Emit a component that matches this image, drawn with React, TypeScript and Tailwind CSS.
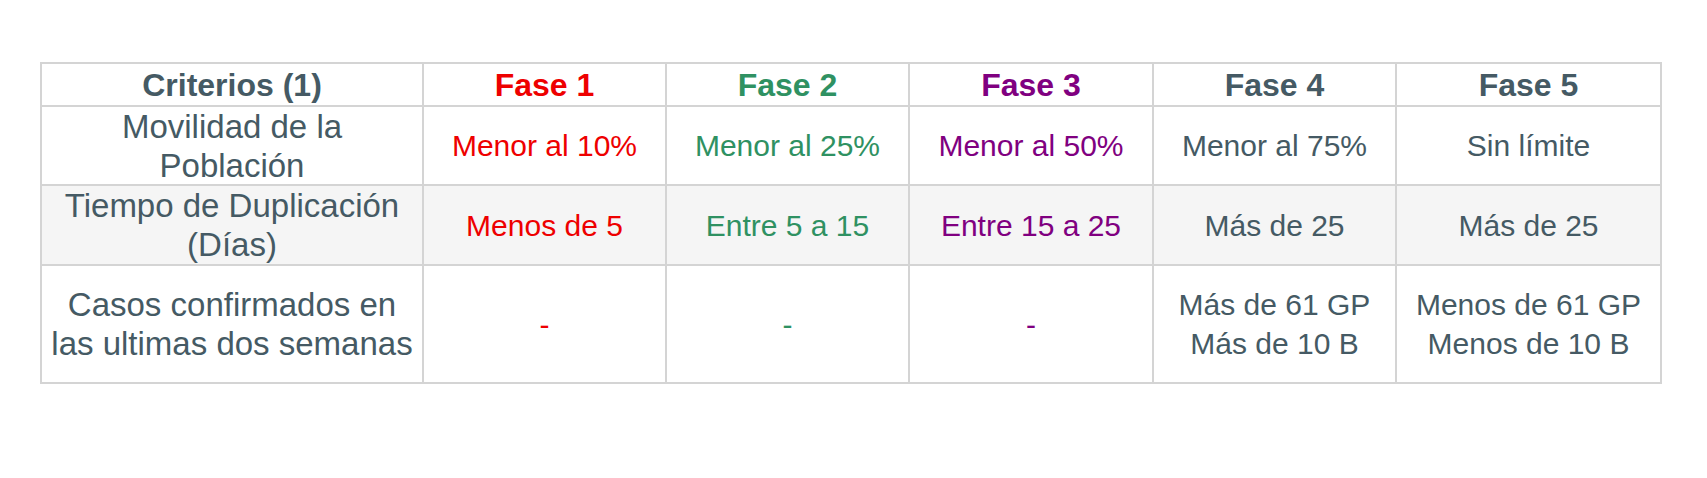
import { Fragment } from "react";

const GRAY = "text-[#455a64]";

const phases = [
  { name: "Fase 1", color: "text-[#ee0000]" },
  { name: "Fase 2", color: "text-[#2f9162]" },
  { name: "Fase 3", color: "text-[#800080]" },
  { name: "Fase 4", color: GRAY },
  { name: "Fase 5", color: GRAY },
];

const rows = [
  {
    label: ["Movilidad de la", "Población"],
    values: [["Menor al 10%"], ["Menor al 25%"], ["Menor al 50%"], ["Menor al 75%"], ["Sin límite"]],
    bg: "bg-white",
    h: "h-[77px]",
  },
  {
    label: ["Tiempo de Duplicación", "(Días)"],
    values: [["Menos de 5"], ["Entre 5 a 15"], ["Entre 15 a 25"], ["Más de 25"], ["Más de 25"]],
    bg: "bg-[#f5f5f5]",
    h: "h-[78px]",
  },
  {
    label: ["Casos confirmados en", "las ultimas dos semanas"],
    values: [["-"], ["-"], ["-"], ["Más de 61 GP", "Más de 10 B"], ["Menos de 61 GP", "Menos de 10 B"]],
    bg: "bg-white",
    h: "h-[116px]",
  },
];

export default function App() {
  return (
    <div
      className="w-full h-[478px] bg-white pt-[62px] pl-[40px]"
      style={{ fontFamily: '"Liberation Sans", Arial, sans-serif' }}
    >
      <div className="grid w-fit grid-cols-[380px_241px_241px_242px_241px_263px] gap-[2px] bg-[#d4d4d4] p-[2px]">
        {/* header */}
        <div className={`h-[41px] bg-white flex items-center justify-center text-[32px] leading-[36px] font-bold ${GRAY}`}>
          Criterios (1)
        </div>
        {phases.map((p) => (
          <div
            key={p.name}
            className={`h-[41px] bg-white flex items-center justify-center text-[32px] leading-[36px] font-bold ${p.color}`}
          >
            {p.name}
          </div>
        ))}

        {rows.map((r) => (
          <Fragment key={r.label[0]}>
            <div
              className={`${r.h} ${r.bg} flex flex-col items-center justify-center text-center text-[33px] leading-[39px] ${GRAY}`}
            >
              {r.label.map((l) => (
                <span key={l} className="whitespace-nowrap">{l}</span>
              ))}
            </div>
            {r.values.map((v, i) => (
              <div
                key={i}
                className={`${r.h} ${r.bg} flex flex-col items-center justify-center text-center text-[30px] leading-[39px] ${phases[i].color}`}
              >
                {v.map((t) => (
                  <span key={t} className="whitespace-nowrap">{t}</span>
                ))}
              </div>
            ))}
          </Fragment>
        ))}
      </div>
    </div>
  );
}
